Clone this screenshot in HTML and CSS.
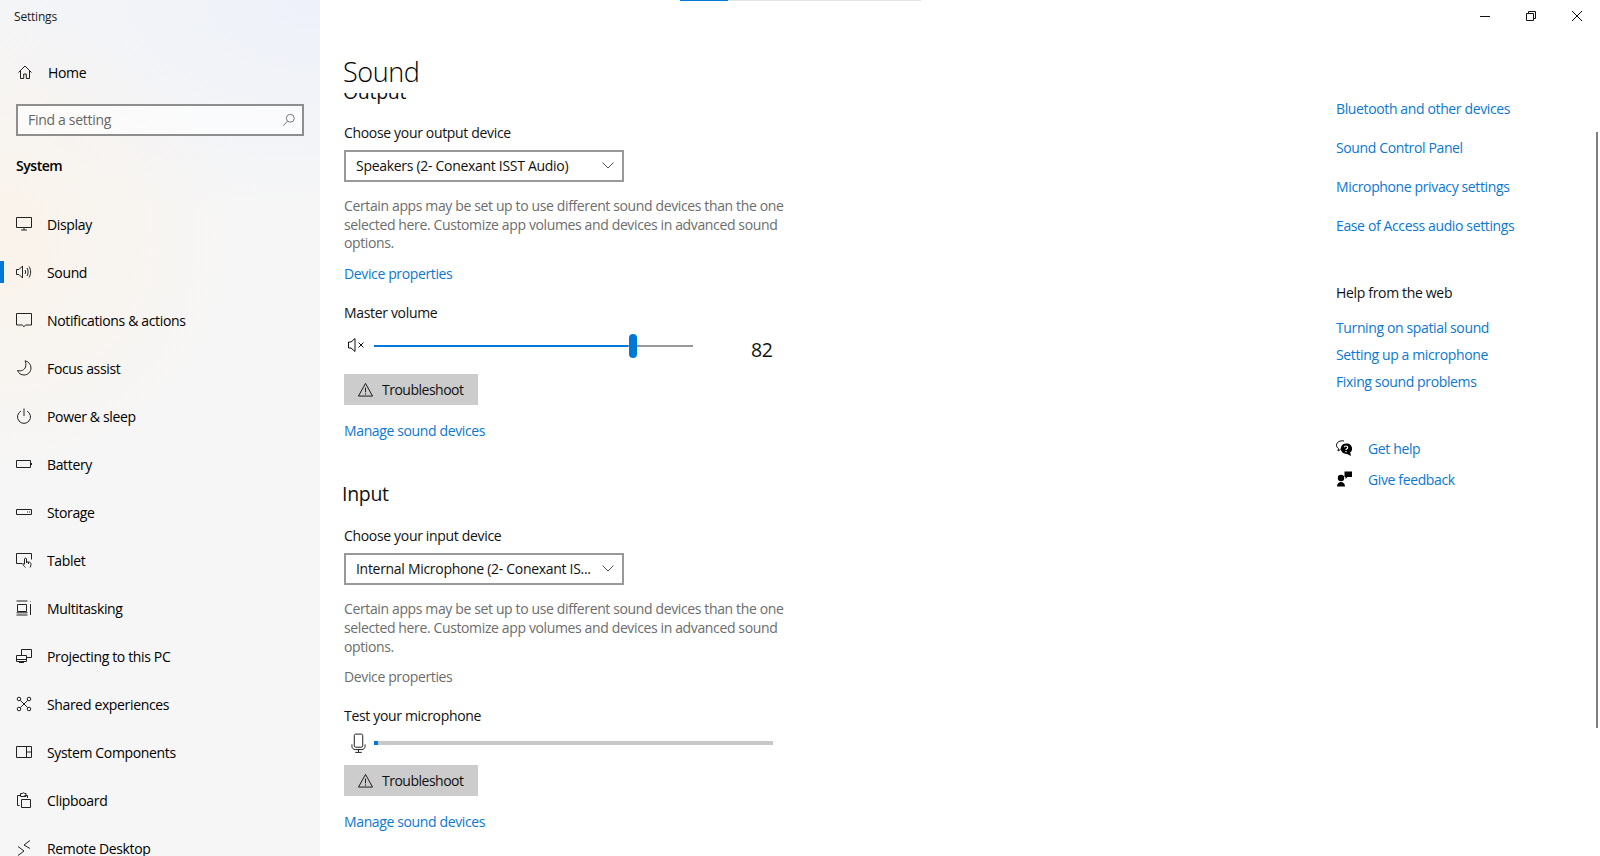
FILE: index.html
```html
<!DOCTYPE html>
<html lang="en">
<head>
<meta charset="utf-8">
<title>Settings</title>
<link rel="stylesheet" href="styles.css">
</head>
<body>
<div class="app">
  <aside class="sidebar">
    <div class="app-title">Settings</div>
    <a class="home-row">
      <svg class="ico" viewBox="0 0 16 16"><path d="M1.500 8.500 8 2l6.500 6.500M3.500 7v7.500h3.200V10h2.600v4.500h3.200V7"/></svg>
      <span>Home</span>
    </a>
    <div class="search">
      <span>Find a setting</span>
      <svg class="ico-s" viewBox="0 0 16 16"><circle cx="9.500" cy="6" r="4.500"/><path d="M6.300 9.300 1.500 14.500"/></svg>
    </div>
    <div class="group-title">System</div>
    <nav class="nav">
      <a class="nav-item"><svg class="ico" viewBox="0 0 16 16"><path d="M.5 1.500h15v10H.5zM8 11.500v2.500M5 14h6"/></svg><span>Display</span></a>
      <a class="nav-item active"><svg class="ico" viewBox="0 0 16 16"><path d="M.5 5.500h2.500L6.500 2v12L3 10.500H.5zM9 6c.8 1.200.8 2.800 0 4M11 4c1.500 2.400 1.500 5.600 0 8M13 2.500c2.200 3.300 2.200 7.700 0 11"/></svg><span>Sound</span></a>
      <a class="nav-item"><svg class="ico" viewBox="0 0 16 16"><path d="M.5 1.500h15v11.500H9.500L8 14.800 6.200 13H.5z"/></svg><span>Notifications &amp; actions</span></a>
      <a class="nav-item"><svg class="ico" viewBox="0 0 16 16"><path d="M9 .8C12.500 1.500 15 4.400 15 8c0 3.900-3.100 7-7 7-3 0-5.600-1.800-6.500-4.500 3.800 1 7-.500 8-3.500.7-2.200.4-4.500-.5-6.200z"/></svg><span>Focus assist</span></a>
      <a class="nav-item"><svg class="ico" viewBox="0 0 16 16"><path d="M8 .5v7.500M4.800 3.200a6.500 6.500 0 1 0 6.400 0"/></svg><span>Power &amp; sleep</span></a>
      <a class="nav-item"><svg class="ico" viewBox="0 0 16 16"><path d="M.5 4.500h14v7H.5zM15.500 7v2"/></svg><span>Battery</span></a>
      <a class="nav-item"><svg class="ico" viewBox="0 0 16 16"><path d="M.5 5.500h15v5H.5zM11 8h1M13 8h1"/></svg><span>Storage</span></a>
      <a class="nav-item"><svg class="ico" viewBox="0 0 16 16"><path d="M6.500 11.500H.5v-10h15v6M9.500 15.500c-1.200-1-2.500-2.400-2.500-3.200 0-.6.800-.8 1.500-.2V7c0-1.200 2-1.200 2 0v3h2c1.500 0 2.500.8 2.500 2.200 0 1.500-.5 2.300-1 3.300M10.500 7v4M12.500 10v2"/></svg><span>Tablet</span></a>
      <a class="nav-item"><svg class="ico" viewBox="0 0 16 16"><path d="M.5 1h11M.5 15h11M1.500 4.500h9v7h-9zM14.500 1v.5M14.500 4v11M.5 12.800h11"/></svg><span>Multitasking</span></a>
      <a class="nav-item"><svg class="ico" viewBox="0 0 16 16"><path d="M5.500 7V1.500h10v8H11M.5 7.500h10v6H.5zM.5 11.500h10M3 14.500h5"/></svg><span>Projecting to this PC</span></a>
      <a class="nav-item"><svg class="ico" viewBox="0 0 16 16"><circle cx="3" cy="3" r="1.800"/><circle cx="13" cy="3" r="1.800"/><circle cx="3" cy="13" r="1.800"/><circle cx="13" cy="13" r="1.800"/><path d="m4.300 4.300 7.400 7.400M11.700 4.300l-7.400 7.400"/></svg><span>Shared experiences</span></a>
      <a class="nav-item"><svg class="ico" viewBox="0 0 16 16"><path d="M.5 2.500h15v11H.5zM10.500 2.500v11M10.500 8h5"/></svg><span>System Components</span></a>
      <a class="nav-item"><svg class="ico" viewBox="0 0 16 16"><path d="M3.500 13.500h-2v-10h3M8.500 3.500h3V6M5 1.500h1.500c0-1 2-1 2 0H10v3H4.500v-3zM5.500 7.500h9v8h-9z"/></svg><span>Clipboard</span></a>
      <a class="nav-item"><svg class="ico" viewBox="0 0 16 16"><path d="M2 6.500 8 11l-6 4.500M14 .5 8 5l6 3.500"/></svg><span>Remote Desktop</span></a>
    </nav>
  </aside>

  <main class="main">
    <div class="progress"><div class="progress-fill"></div></div>
    <div class="winbar">
      <button class="winbtn"><svg viewBox="0 0 10 10"><path d="M0 5.500h10"/></svg></button>
      <button class="winbtn"><svg viewBox="0 0 10 10"><path d="M.5 2.500h7v7h-7zM2.500 2.500v-2h7v7h-2"/></svg></button>
      <button class="winbtn"><svg viewBox="0 0 10 10"><path d="m0 0 10 10M10 0 0 10"/></svg></button>
    </div>
    <h1 class="page-title">Sound</h1>
    <div class="page-body">
      <section class="content">
        <div class="scroller">
          <h2 class="section-title output-title">Output</h2>
          <div class="label">Choose your output device</div>
          <div class="select"><span>Speakers (2- Conexant ISST Audio)</span><svg viewBox="0 0 12 7"><path d="m.5.500 5.500 5.500L11.500.500"/></svg></div>
          <p class="desc">Certain apps may be set up to use different sound devices than the one selected here. Customize app volumes and devices in advanced sound options.</p>
          <a class="link block-link">Device properties</a>
          <div class="label label-vol">Master volume</div>
          <div class="volume">
            <svg class="ico-vol" viewBox="0 0 18 16"><path d="M.5 5h2.500L7 1.500v13L3 11H.5zM10.500 5.500l5 5M15.500 5.500l-5 5"/></svg>
            <div class="track">
              <div class="track-fill"></div>
              <div class="thumb"></div>
            </div>
            <span class="vol-val">82</span>
          </div>
          <button class="ts-btn"><svg viewBox="0 0 16 16"><path d="M8 1.500 15.500 15H.5zM8 6v5M8 12.200v1.300"/></svg><span>Troubleshoot</span></button>
          <a class="link manage">Manage sound devices</a>

          <h2 class="section-title input-title">Input</h2>
          <div class="label">Choose your input device</div>
          <div class="select"><span>Internal Microphone (2- Conexant IS...</span><svg viewBox="0 0 12 7"><path d="m.5.500 5.500 5.500L11.500.500"/></svg></div>
          <p class="desc">Certain apps may be set up to use different sound devices than the one selected here. Customize app volumes and devices in advanced sound options.</p>
          <a class="link block-link disabled">Device properties</a>
          <div class="label label-vol">Test your microphone</div>
          <div class="mic-row">
            <svg class="ico-mic" viewBox="0 0 16 21"><path d="M5 1h6c1 0 1.500.7 1.500 1.500v11c0 1-.7 1.500-1.500 1.500H5c-1 0-1.500-.7-1.500-1.500v-11C3.500 1.700 4 1 5 1zM1 12v2c0 2 1.500 3.500 3.500 3.500h7c2 0 3.500-1.500 3.500-3.500v-2M8 17.500V20M4.500 20.500h7"/></svg>
            <div class="meter"><div class="meter-fill"></div></div>
          </div>
          <button class="ts-btn"><svg viewBox="0 0 16 16"><path d="M8 1.500 15.500 15H.5zM8 6v5M8 12.200v1.300"/></svg><span>Troubleshoot</span></button>
          <a class="link manage">Manage sound devices</a>
        </div>
      </section>
      <section class="related">
        <a class="link rel-link">Bluetooth and other devices</a>
        <a class="link rel-link">Sound Control Panel</a>
        <a class="link rel-link">Microphone privacy settings</a>
        <a class="link rel-link">Ease of Access audio settings</a>
        <div class="help-title">Help from the web</div>
        <a class="link help-link">Turning on spatial sound</a>
        <a class="link help-link">Setting up a microphone</a>
        <a class="link help-link">Fixing sound problems</a>
        <div class="support">
          <div class="support-row">
            <svg viewBox="0 0 16 16" class="ico-fill"><path class="ol" d="M8 1C4 .2.500 2.200.500 5.200c0 1.400.8 2.600 2 3.400L2 11l2.700-1.700"/><path d="M10 3.500a5.200 5.200 0 0 0-3.800 8.800c1.100 1 2.800 1.700 4.800 1.700l4 2-.8-3.400A5.200 5.200 0 0 0 10 3.500z"/><path class="qm" d="M8.300 7.200c.2-1.600 3.400-1.600 3.400.2 0 1.300-1.700 1.300-1.700 2.600M10 11v1.200"/></svg>
            <a class="link">Get help</a>
          </div>
          <div class="support-row">
            <svg viewBox="0 0 16 16" class="ico-fill"><circle cx="5" cy="7" r="3.200"/><path d="M1 15.500c0-3 1.800-4.500 4-4.500s4 1.500 4 4.500zM8.500.5H16v5.500h-4.500L9.500 8V6H8.500z"/></svg>
            <a class="link">Give feedback</a>
          </div>
        </div>
      </section>
    </div>
    <div class="scrollbar"></div>
  </main>
</div>
</body>
</html>
```

FILE: styles.css
```css
* { box-sizing: border-box; }
html, body { margin: 0; padding: 0; height: 100%; overflow: hidden; }
body { font-family: "Open Sans", "Noto Sans", sans-serif; font-size: 14px; color: #000; background: #fff; }
a { text-decoration: none; color: inherit; }
h1, h2, p { margin: 0; font-weight: 400; }
svg { fill: none; stroke: currentColor; stroke-width: 1; }

.app { display: flex; height: 856px; overflow: hidden; }

/* sidebar */
.sidebar {
  width: 320px; flex: none; height: 856px; overflow: hidden;
  background:
    radial-gradient(ellipse 240px 240px at 0 240px, rgba(253,240,224,.55), rgba(253,240,224,0)),
    radial-gradient(ellipse 400px 220px at 320px 0, rgba(236,240,250,.85), rgba(236,240,250,0)),
    #f6f6f6;
}
.app-title { height: 34px; line-height: 34px; padding-left: 14px; font-size: 12px; letter-spacing: -.2px; color: #1a1a1a; }
.home-row { display: flex; align-items: center; height: 48px; margin-top: 14px; padding-left: 17px; gap: 15px; letter-spacing: -.35px; }
.ico { width: 16px; height: 16px; flex: none; color: #222; }
.search {
  display: flex; align-items: center; justify-content: space-between;
  width: 288px; height: 32px; margin: 8px 0 0 16px; padding: 0 6px 2px 10px;
  border: 2px solid #8e8e8e; background: rgba(255,255,255,.6); color: #666; letter-spacing: -.3px;
}
.search .ico-s { margin-top: 2px; }
.ico-s { width: 14px; height: 14px; color: #666; }
.group-title { margin: 20px 0 0 16px; height: 20px; line-height: 20px; font-weight: 600; letter-spacing: -.45px; }
.nav { margin-top: 24px; display: flex; flex-direction: column; }
.nav-item { position: relative; display: flex; align-items: center; height: 48px; flex: none; padding-left: 16px; gap: 15px; letter-spacing: -.35px; }
.nav-item .ico { margin-top: -1px; }
.nav-item.active::before { content: ""; position: absolute; left: 0; top: 13px; width: 4px; height: 22px; background: #0078d7; }

/* main */
.main { position: relative; flex: 1; display: flex; flex-direction: column; min-width: 0; background: #fff; }
.progress { flex: none; width: 241px; height: 1px; margin-left: 360px; background: #e4e4e4; }
.progress-fill { width: 48px; height: 1px; background: #0078d7; }
.winbar { flex: none; display: flex; justify-content: flex-end; height: 29px; }
.winbtn { width: 46px; height: 29px; padding: 0; border: 0; background: none; display: flex; align-items: center; justify-content: center; color: #111; }
.winbtn svg { width: 10px; height: 10px; }
.page-title { flex: none; height: 63px; margin-left: 23px; font-size: 27px; font-weight: 300; line-height: 40px; padding-top: 22px; letter-spacing: -.4px; color: #000; }
.page-body { flex: 1; display: flex; min-height: 0; }
.content { width: 1016px; flex: none; overflow: hidden; padding-left: 23px; }
.scroller { margin-top: -15px; }
.section-title { font-size: 19.500px; line-height: 28px; height: 28px; letter-spacing: -.3px; color: #111; }
.output-title { margin-bottom: -1px; }
.input-title { margin-top: 39px; margin-left: -1px; }
.label { margin: 18px 0 0 1px; height: 20px; line-height: 20px; letter-spacing: -.33px; color: #111; }
.select {
  display: flex; align-items: center; justify-content: space-between;
  width: 280px; height: 32px; margin: 7px 0 0 1px; padding: 0 8px 2px 10px;
  border: 2px solid #999; letter-spacing: -.3px; color: #111;
}
.select svg { width: 12px; height: 7px; color: #555; }
.desc { width: 444px; margin: 15px 0 0 1px; line-height: 18.700px; color: #6d6d6d; letter-spacing: -.37px; }
.link { color: #0a78d4; letter-spacing: -.37px; }
.block-link { display: block; margin: 11px 0 0 1px; height: 20px; line-height: 20px; }
.disabled { color: #6d6d6d; }
.label-vol { margin-top: 19px; }
.volume { display: flex; align-items: center; height: 43px; margin: 0 0 0 5px; }
.ico-vol { width: 18px; height: 16px; color: #111; margin-right: 8px; }
.track { position: relative; width: 319px; height: 2px; background: #999; margin-top: 2px; }
.track-fill { width: 254px; height: 2px; background: #0078d7; }
.thumb { position: absolute; left: 255px; top: -11px; width: 8px; height: 24px; border-radius: 4px; background: #0078d7; }
.vol-val { margin: 10px 0 0 58px; font-size: 19.500px; letter-spacing: -.3px; line-height: 24px; color: #111; }
.ts-btn {
  display: flex; align-items: center; width: 134px; height: 31px; margin: 8px 0 0 1px; padding: 0 0 0 14px;
  border: 0; background: #ccc; font: inherit; letter-spacing: -.5px; color: #111; gap: 9px;
}
.ts-btn svg { width: 15px; height: 15px; color: #111; }
.manage { display: block; margin: 16px 0 0 1px; height: 20px; line-height: 20px; }
.mic-row { display: flex; align-items: center; height: 33px; margin-left: 8px; }
.ico-mic { width: 15px; height: 20px; margin-right: 8px; color: #111; }
.meter { width: 399px; height: 4px; background: #c8c8c8; }
.meter-fill { width: 4px; height: 4px; background: #0078d7; }
.mic-row + .ts-btn { margin-top: 6px; }

/* related */
.related { width: 240px; flex: none; display: flex; flex-direction: column; margin-top: 6px; }
.rel-link { display: block; height: 39px; line-height: 20px; flex: none; }
.help-title { margin-top: 28px; height: 20px; line-height: 20px; letter-spacing: -.33px; color: #111; }
.help-link { display: block; height: 27px; line-height: 27px; flex: none; }
.help-title + .help-link { margin-top: 11px; }
.support { margin-top: 43px; display: flex; flex-direction: column; gap: 11px; }
.support-row { display: flex; align-items: center; gap: 16px; height: 20px; }
.ico-fill { width: 16px; height: 16px; fill: #000; stroke: none; }
.ico-fill .ol { fill: none; stroke: #000; stroke-width: 1; }
.ico-fill .qm { fill: none; stroke: #fff; stroke-width: 1.200; }

.scrollbar { position: absolute; right: 2px; top: 132px; width: 2px; height: 596px; background: #7f7f7f; }
```
